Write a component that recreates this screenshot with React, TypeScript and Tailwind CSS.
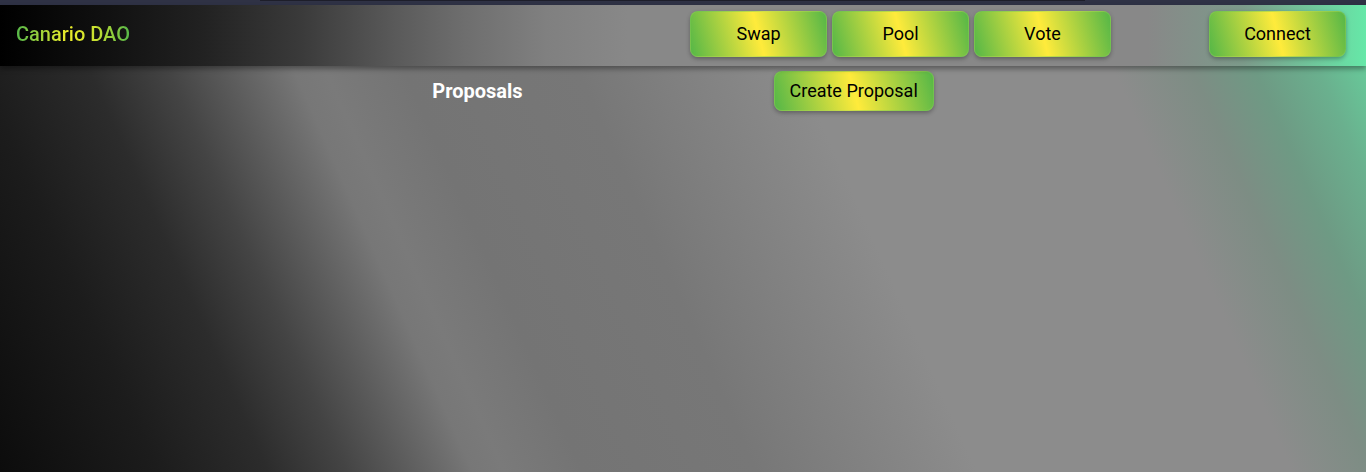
const navItems = ['Swap', 'Pool', 'Vote'];

function GradientButton({ label, className }: { label: string; className: string }) {
  return (
    <button
      className={`rounded-lg bg-[linear-gradient(75deg,#55b747_0%,#ffeb3b_50%,#55b747_100%)] text-black text-[18px] leading-none shadow-[0_2px_4px_rgba(0,0,0,0.3)] border border-[#8fcf5a]/40 ${className}`}
    >
      {label}
    </button>
  );
}

export default function App() {
  return (
    <div className="min-h-[472px] flex flex-col font-['Roboto',sans-serif] bg-[linear-gradient(66deg,#0c0c0c_0%,#1c1c1c_10%,#2c2c2c_17%,#444444_22%,#5a5a5a_25.5%,#6a6a6a_28%,#777777_30%,#7a7a7a_32%,#747474_37%,#777777_48%,#8c8c8c_62%,#8c8c8c_82%,#7d8d84_87%,#6e9a84_91%,#6ab08e_95%,#66d8a0_100%)]">
      {/* top strip */}
      <div className="h-[5px] bg-[#2f3245] flex">
        <div className="ml-[260px] w-[825px] h-[1px] bg-[#1d1e2a]" />
      </div>

      <header className="h-[61px] flex items-start pl-4 pr-5 bg-[linear-gradient(to_right,#000000_0%,#111111_8%,#222222_15%,#3a3a3a_22%,#5a5a5a_29%,#6e6e6e_34%,#808080_40%,#888888_46%,#888888_84%,#7c9a8a_91%,#66e8a8_100%)] shadow-[0_3px_5px_rgba(0,0,0,0.35)] relative z-10">
        <span className="mt-[17px] text-[20px] leading-6 font-medium bg-[linear-gradient(to_right,#55b84a_0%,#ecec2a_45%,#c8e030_70%,#55b84a_100%)] bg-clip-text text-transparent">
          Canario DAO
        </span>
        <nav className="ml-[560px] mt-[6px] flex gap-[5px]">
          {navItems.map((item) => (
            <GradientButton key={item} label={item} className="w-[137px] h-[46px]" />
          ))}
        </nav>
        <GradientButton label="Connect" className="ml-auto mt-[6px] w-[137px] h-[46px]" />
      </header>

      <main className="flex justify-center items-center gap-[251px] pt-[5px]">
        <h2 className="text-white text-[20px] font-bold">Proposals</h2>
        <GradientButton label="Create Proposal" className="w-[160px] h-[40px]" />
      </main>
    </div>
  );
}
